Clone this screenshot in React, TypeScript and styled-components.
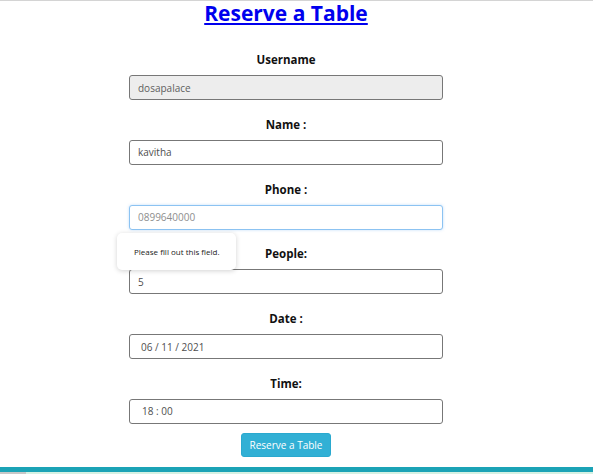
import React from "react";
import styled, { createGlobalStyle } from "styled-components";

const GlobalStyle = createGlobalStyle`
  html, body {
    margin: 0;
    padding: 0;
    background: #ffffff;
    font-family: "Open Sans", "Liberation Sans", sans-serif;
  }
  * { box-sizing: border-box; }
`;

const Page = styled.div`
  border-top: 1px solid #d4d4d4;
  display: flex;
  flex-direction: column;
`;

const Main = styled.main`
  width: 572px;
  display: flex;
  flex-direction: column;
  align-items: center;
`;

const Title = styled.h1`
  margin: -2px 0 0;
  font-size: 21px;
  line-height: 28px;
  font-weight: 700;
  text-align: center;
`;

const TitleLink = styled.a`
  color: #0000ee;
  text-decoration: underline;
  text-underline-offset: 2px;
`;

const Form = styled.form`
  width: 314px;
  margin-top: 25px;
  display: flex;
  flex-direction: column;
  align-items: center;
`;

const Field = styled.div`
  position: relative;
  width: 100%;
  display: flex;
  flex-direction: column;
  align-items: center;
  & + & {
    margin-top: 16.8px;
  }
`;

const Label = styled.label`
  font-size: 11.5px;
  line-height: 16px;
  font-weight: 700;
  color: #111;
  margin-bottom: 7px;
`;

const Input = styled.input<{ $inset?: number; $focused?: boolean; $locked?: boolean }>`
  width: 100%;
  height: 25px;
  padding: 0 8px 0 ${(p) => p.$inset ?? 8}px;
  border: 1px solid ${(p) => (p.$focused ? "#8cc3f2" : "#777")};
  border-radius: 3px;
  background: ${(p) => (p.$locked ? "#ededed" : "#fff")};
  box-shadow: ${(p) => (p.$focused ? "0 0 3px rgba(80, 160, 240, 0.35)" : "none")};
  font-family: "Open Sans", "Liberation Sans", sans-serif;
  font-size: 10px;
  color: ${(p) => (p.$locked ? "#5e5e5e" : "#4e4e4e")};
  outline: none;
  &::placeholder {
    color: #8e8e8e;
  }
`;

const Tooltip = styled.div`
  position: absolute;
  left: -12px;
  top: 51px;
  width: 119px;
  height: 37px;
  padding-left: 17px;
  display: flex;
  align-items: center;
  background: #fff;
  border-radius: 5px;
  box-shadow: 0 1px 5px rgba(0, 0, 0, 0.18);
  font-family: "Open Sans", "Liberation Sans", sans-serif;
  font-size: 8px;
  color: #222;
  z-index: 2;
`;

const SubmitButton = styled.button`
  margin-top: 9px;
  width: 90px;
  height: 24px;
  padding: 0;
  border: 1px solid #2aa9cf;
  border-radius: 3px;
  background: #31b0d5;
  color: #fff;
  font-family: "Open Sans", "Liberation Sans", sans-serif;
  font-size: 10px;
  cursor: pointer;
`;

const FooterBar = styled.footer`
  margin-top: 10px;
  height: 7px;
  border-top: 5px solid #1ba3b6;
  background: linear-gradient(to right, #c8c8c8 26px, #d5f1e3 26px);
`;

type FieldDef = {
  label: string;
  value?: string;
  placeholder?: string;
  inset?: number;
  focused?: boolean;
  locked?: boolean;
  tooltip?: string;
};

const fields: FieldDef[] = [
  { label: "Username", value: "dosapalace", locked: true },
  { label: "Name :", value: "kavitha" },
  { label: "Phone :", placeholder: "0899640000", focused: true, tooltip: "Please fill out this field." },
  { label: "People:", value: "5" },
  { label: "Date :", value: "06 / 11 / 2021", inset: 11 },
  { label: "Time:", value: "18 : 00", inset: 12 },
];

export default function App() {
  return (
    <>
      <GlobalStyle />
      <Page>
        <Main>
          <Title>
            <TitleLink href="#">Reserve a Table</TitleLink>
          </Title>
          <Form onSubmit={(e) => e.preventDefault()}>
            {fields.map((f) => (
              <Field key={f.label}>
                <Label>{f.label}</Label>
                <Input
                  type="text"
                  defaultValue={f.value}
                  placeholder={f.placeholder}
                  readOnly={f.locked}
                  $inset={f.inset}
                  $focused={f.focused}
                  $locked={f.locked}
                />
                {f.tooltip && <Tooltip>{f.tooltip}</Tooltip>}
              </Field>
            ))}
            <SubmitButton type="submit">Reserve a Table</SubmitButton>
          </Form>
        </Main>
        <FooterBar />
      </Page>
    </>
  );
}
